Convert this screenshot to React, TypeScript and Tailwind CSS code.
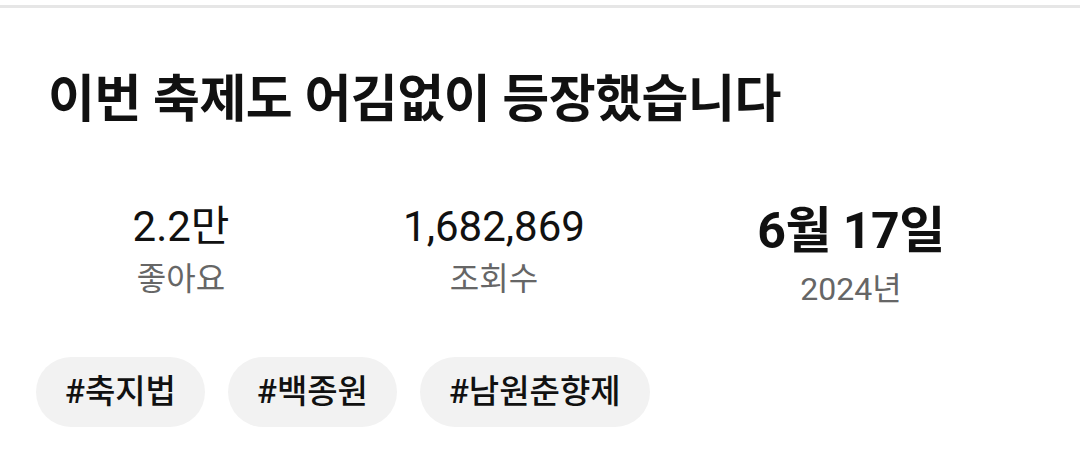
export default function App() {
  return (
    <div className="w-[1080px] h-[453px] bg-white overflow-hidden" style={{ fontFamily: 'Roboto, "Noto Sans CJK KR", sans-serif' }}>
      <div className="h-[3px] mt-[5px] bg-[#e6e6e6]" />

      <h1 className="mt-[66px] pl-[48px] text-[51px] leading-none font-bold text-[#111] tracking-[-0.5px]">
        이번 축제도 어김없이 등장했습니다
      </h1>

      {/* stats */}
      <div className="mt-[81px] pl-[50px] grid grid-cols-[262px_364px_350px]">
        <div className="flex flex-col items-center">
          <span className="text-[42px] leading-none text-[#111]">2.2만</span>
          <span className="mt-[15px] text-[32px] leading-none text-[#666]">좋아요</span>
        </div>
        <div className="flex flex-col items-center">
          <span className="text-[42px] leading-none text-[#111]">1,682,869</span>
          <span className="mt-[15px] text-[32px] leading-none text-[#666]">조회수</span>
        </div>
        <div className="flex flex-col items-center">
          <span className="text-[50px] leading-none font-bold text-[#111] tracking-[-0.5px]">6월 17일</span>
          <span className="mt-[17px] text-[32px] leading-none text-[#666]">2024년</span>
        </div>
      </div>

      {/* tags */}
      <div className="mt-[52px] pl-[36px] flex gap-[23px]">
        {['#축지법', '#백종원', '#남원춘향제'].map((t) => (
          <div key={t} className="h-[70px] px-[29px] rounded-full bg-[#f2f2f2] flex items-center text-[33px] font-medium text-[#111]">
            {t}
          </div>
        ))}
      </div>
    </div>
  );
}
